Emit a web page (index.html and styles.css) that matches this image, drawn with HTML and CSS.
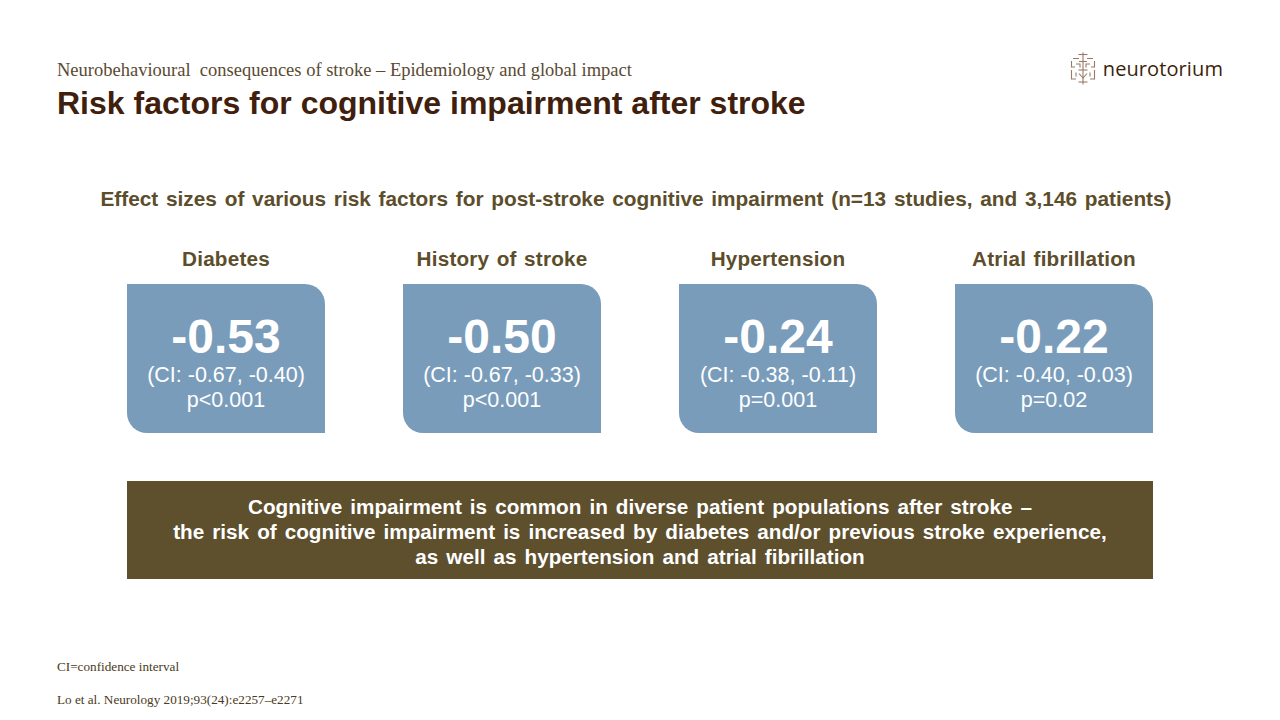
FILE: index.html
```html
<!DOCTYPE html>
<html>
<head>
<meta charset="utf-8">
<link rel="stylesheet" href="styles.css">
</head>
<body>
<div class="slide">
  <header class="header">
    <div class="titles">
      <div class="kicker">Neurobehavioural&nbsp; consequences of stroke – Epidemiology and global impact</div>
      <h1 class="title">Risk factors for cognitive impairment after stroke</h1>
    </div>
    <div class="logo">
      <svg class="logo-icon" width="28" height="33" viewBox="0 0 28 33" fill="none" stroke="#9a7a66" stroke-width="1.1">
        <path d="M14 0.5 V32.5"/>
        <path d="M9.5 2.5 H18.5"/>
        <path d="M4 6.5 H10 M18 6.5 H24"/>
        <path d="M10 9.5 H18"/>
        <path d="M2.5 9 V15 H6 M25.5 9 V15 H22"/>
        <path d="M7 12 H11 V15.5 M21 12 H17 V15.5"/>
        <path d="M9.5 18 H18.5"/>
        <path d="M2.5 18 V27 H7 M25.5 18 V27 H21"/>
        <path d="M7 20.5 V24.5 M21 20.5 V24.5"/>
        <path d="M10 21.5 L14 26 L18 21.5"/>
        <path d="M9.5 30 H18.5"/>
      </svg>
      <span class="logo-text">neurotorium</span>
    </div>
  </header>

  <main class="content">
    <h2 class="lead">Effect sizes of various risk factors for post-stroke cognitive impairment (n=13 studies, and 3,146 patients)</h2>
    <div class="cards">
      <div class="card">
        <div class="card-label">Diabetes</div>
        <div class="card-box">
          <div class="value">-0.53</div>
          <div class="ci">(CI: -0.67, -0.40)</div>
          <div class="ci">p&lt;0.001</div>
        </div>
      </div>
      <div class="card">
        <div class="card-label">History of stroke</div>
        <div class="card-box">
          <div class="value">-0.50</div>
          <div class="ci">(CI: -0.67, -0.33)</div>
          <div class="ci">p&lt;0.001</div>
        </div>
      </div>
      <div class="card">
        <div class="card-label">Hypertension</div>
        <div class="card-box">
          <div class="value">-0.24</div>
          <div class="ci">(CI: -0.38, -0.11)</div>
          <div class="ci">p=0.001</div>
        </div>
      </div>
      <div class="card">
        <div class="card-label">Atrial fibrillation</div>
        <div class="card-box">
          <div class="value">-0.22</div>
          <div class="ci">(CI: -0.40, -0.03)</div>
          <div class="ci">p=0.02</div>
        </div>
      </div>
    </div>
    <div class="banner">
      Cognitive impairment is common in diverse patient populations after stroke –<br>
      the risk of cognitive impairment is increased by diabetes and/or previous stroke experience,<br>
      as well as hypertension and atrial fibrillation
    </div>
  </main>

  <footer class="footer">
    <div class="note">CI=confidence interval</div>
    <div class="note">Lo et al. Neurology 2019;93(24):e2257–e2271</div>
  </footer>
</div>
</body>
</html>
```

FILE: styles.css
```css
* { box-sizing: border-box; }
html, body { margin: 0; padding: 0; background: #ffffff; }
.slide {
  width: 1280px;
  height: 720px;
  font-family: "Liberation Sans", Arial, sans-serif;
  display: flex;
  flex-direction: column;
}
.header {
  display: flex;
  justify-content: space-between;
  align-items: flex-start;
  padding: 60px 57px 0 57px;
}
.kicker {
  font-family: "Liberation Serif", "Times New Roman", serif;
  font-size: 18.5px;
  line-height: 20px;
  color: #5a4a32;
}
.title {
  margin: 6px 0 0 0;
  font-size: 32px;
  line-height: 34px;
  font-weight: bold;
  color: #40200c;
}
.logo {
  display: flex;
  align-items: center;
  gap: 6px;
  margin-top: -8px;
}
.logo-icon { display: block; }
.logo-text {
  font-family: "Open Sans", "Liberation Sans", sans-serif;
  font-size: 20px;
  color: #3d1f0a;
  letter-spacing: 0.1px;
}
.content {
  display: flex;
  flex-direction: column;
  align-items: center;
  padding-top: 67px;
}
.lead {
  margin: 0 8px 0 0;
  font-size: 20.8px;
  line-height: 24px;
  font-weight: bold;
  color: #5c4d2b;
  word-spacing: 2px;
  white-space: nowrap;
}
.cards {
  display: flex;
  gap: 78px;
  margin-top: 36px;
}
.card {
  width: 198px;
  display: flex;
  flex-direction: column;
  align-items: center;
}
.card-label {
  font-size: 20.7px;
  line-height: 24px;
  font-weight: bold;
  color: #5c4d2b;
  white-space: nowrap;
  letter-spacing: 0.2px;
  word-spacing: 1.5px;
}
.card-box {
  margin-top: 13px;
  width: 198px;
  height: 149px;
  background: #7a9cbb;
  border-radius: 0 20px 0 20px;
  color: #ffffff;
  text-align: center;
  padding-top: 27px;
}
.value {
  font-size: 48px;
  line-height: 52px;
  font-weight: bold;
}
.ci {
  font-size: 21.5px;
  line-height: 25px;
  white-space: nowrap;
}
.banner {
  margin-top: 48px;
  width: 1026px;
  height: 98px;
  background: #5e4f2d;
  color: #ffffff;
  font-size: 20.7px;
  line-height: 25px;
  font-weight: bold;
  text-align: center;
  padding-top: 13px;
  word-spacing: 2.3px;
}
.footer {
  margin-top: auto;
  padding: 0 57px 13px 57px;
  display: flex;
  flex-direction: column;
  gap: 18px;
}
.note {
  font-family: "Liberation Serif", "Times New Roman", serif;
  font-size: 13.2px;
  line-height: 15px;
  color: #4a3a22;
}
```
